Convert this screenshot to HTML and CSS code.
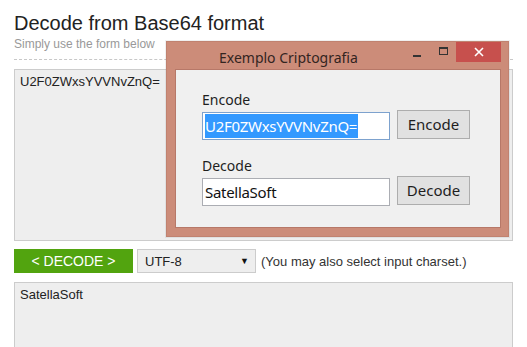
FILE: index.html
```html
<!DOCTYPE html>
<html>
<head>
<meta charset="utf-8">
<link rel="stylesheet" href="styles.css">
</head>
<body>
<div class="page">
  <h1 class="title">Decode from Base64 format</h1>
  <div class="subtitle">Simply use the form below</div>
  <div class="sep"></div>
  <div class="area area-top">U2F0ZWxsYVVNvZnQ=</div>
  <div class="controls">
    <div class="go">&lt; DECODE &gt;</div>
    <div class="select"><span>UTF-8</span><span class="arrow">▼</span></div>
    <div class="hint">(You may also select input charset.)</div>
  </div>
  <div class="area area-bottom">SatellaSoft</div>
</div>

<div class="win">
  <div class="titlebar">
    <div class="wtitle">Exemplo Criptografia</div>
    <div class="wbtns">
      <div class="wb min"><span class="dash"></span></div>
      <div class="wb max"><span class="box"></span></div>
      <div class="wb close">
        <svg width="10" height="10" viewBox="0 0 10 10"><path d="M1 1L9 9M9 1L1 9" stroke="#fff" stroke-width="1.6"/></svg>
      </div>
    </div>
  </div>
  <div class="client">
    <div class="lbl">Encode</div>
    <div class="frow">
      <div class="field focus"><span class="sel">U2F0ZWxsYVVNvZnQ=</span></div>
      <div class="btn">Encode</div>
    </div>
    <div class="lbl lbl2">Decode</div>
    <div class="frow">
      <div class="field">SatellaSoft</div>
      <div class="btn">Decode</div>
    </div>
  </div>
</div>
</body>
</html>
```

FILE: styles.css
```css
html, body {
  margin: 0;
  padding: 0;
  background: #fff;
  width: 527px;
  height: 347px;
  overflow: hidden;
}
.page {
  padding-left: 14px;
  width: 499px;
  font-family: "Liberation Sans", Arial, sans-serif;
  color: #333;
}
.title {
  margin: 11px 0 0 0;
  font-size: 20px;
  line-height: 24px;
  font-weight: normal;
  color: #222;
}
.subtitle {
  margin-top: 2px;
  font-size: 12px;
  line-height: 14px;
  color: #999;
}
.sep {
  margin-top: 8px;
  border-top: 1px dashed #c8c8c8;
}
.area {
  box-sizing: border-box;
  margin-top: 9px;
  background: #eee;
  border: 1px solid #ccc;
  padding: 4px 5px;
  font-size: 13px;
  line-height: 15px;
  color: #222;
}
.area-top { height: 172px; }
.area-bottom { height: 80px; }
.controls {
  display: flex;
  align-items: center;
  margin-top: 8px;
  height: 24px;
}
.go {
  width: 119px;
  height: 24px;
  background: #52a40f;
  color: #fff;
  font-size: 14px;
  line-height: 24px;
  text-align: center;
}
.select {
  box-sizing: border-box;
  margin-left: 4px;
  width: 119px;
  height: 24px;
  background: #eee;
  border: 1px solid #ccc;
  display: flex;
  align-items: center;
  justify-content: space-between;
  padding: 0 6px 0 7px;
  font-size: 13px;
  color: #222;
}
.arrow { font-size: 9px; color: #111; }
.hint {
  margin-left: 5px;
  font-size: 13px;
  color: #333;
}

.win {
  position: absolute;
  left: 166px;
  top: 41px;
  width: 343px;
  height: 196px;
  box-sizing: border-box;
  background: #cc8c79;
  border: 1px solid #c08270;
  padding: 0 7px 8px 8px;
  display: flex;
  flex-direction: column;
  font-family: "Noto Sans", "Open Sans", sans-serif;
  color: #1e1e1e;
  box-shadow: 0 0 0 1px rgba(0,0,0,0.06);
}
.titlebar {
  height: 27px;
  display: flex;
  align-items: flex-start;
  justify-content: space-between;
}
.wtitle {
  margin-left: 44px;
  margin-top: 6px;
  font-size: 14px;
  line-height: 19px;
  color: #33241f;
}
.wbtns {
  display: flex;
  align-items: flex-start;
}
.wb {
  height: 20px;
  display: flex;
  align-items: center;
  justify-content: center;
}
.min { width: 26px; }
.min .dash {
  display: block;
  width: 8px;
  height: 2px;
  background: #333;
  margin-top: 7px;
}
.max { width: 26px; }
.max .box {
  display: block;
  width: 7px;
  height: 5px;
  border: 1px solid #333;
  border-top-width: 2px;
  margin-top: -2px;
}
.close {
  width: 45px;
  background: #c7504d;
}
.client {
  flex: 1;
  background: #f0f0f0;
  border: 1px solid #b77868;
  padding: 20px 0 0 26px;
}
.lbl {
  font-size: 14px;
  line-height: 19px;
  color: #1e1e1e;
}
.lbl2 { margin-top: 16px; }
.frow {
  display: flex;
  align-items: flex-start;
  margin-top: 3px;
}
.field {
  box-sizing: border-box;
  width: 188px;
  height: 28px;
  background: #fff;
  border: 1px solid #abadb3;
  padding: 0 2px;
  font-size: 15px;
  letter-spacing: -0.3px;
  line-height: 26px;
  color: #111;
  white-space: nowrap;
  overflow: hidden;
}
.field.focus { border-color: #7da2ce; }
.sel {
  background: #3399ff;
  color: #fff;
  padding: 2px 1px 2px 0;
}
.btn {
  box-sizing: border-box;
  margin-left: 7px;
  margin-top: -2px;
  width: 73px;
  height: 29px;
  background: #e1e1e1;
  border: 1px solid #adadad;
  font-size: 15px;
  line-height: 27px;
  text-align: center;
  color: #1e1e1e;
}
```
